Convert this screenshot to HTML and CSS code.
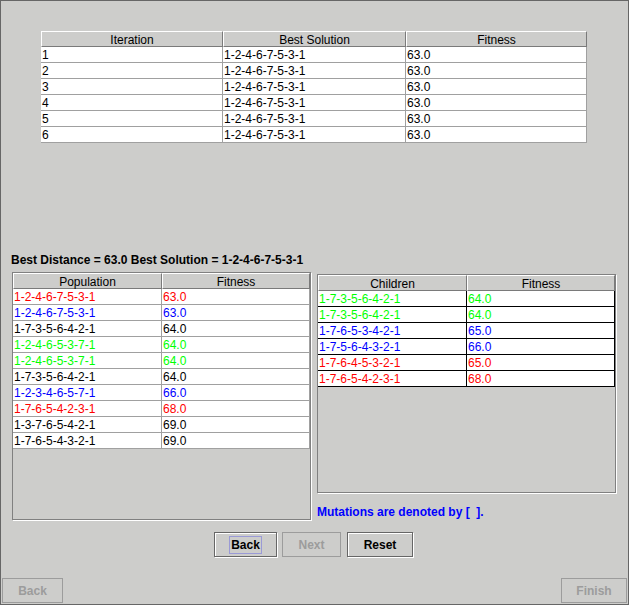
FILE: index.html
```html
<!DOCTYPE html>
<html>
<head>
<meta charset="utf-8">
<title>Genetic Algorithm</title>
<link rel="stylesheet" href="styles.css">
</head>
<body>
<div class="frame">
  <div class="table top">
    <div class="th">Iteration</div><div class="th">Best Solution</div><div class="th">Fitness</div>
    <div class="td">1</div><div class="td">1-2-4-6-7-5-3-1</div><div class="td">63.0</div>
    <div class="td">2</div><div class="td">1-2-4-6-7-5-3-1</div><div class="td">63.0</div>
    <div class="td">3</div><div class="td">1-2-4-6-7-5-3-1</div><div class="td">63.0</div>
    <div class="td">4</div><div class="td">1-2-4-6-7-5-3-1</div><div class="td">63.0</div>
    <div class="td">5</div><div class="td">1-2-4-6-7-5-3-1</div><div class="td">63.0</div>
    <div class="td">6</div><div class="td">1-2-4-6-7-5-3-1</div><div class="td">63.0</div>
  </div>

  <div class="best">Best Distance = 63.0 Best Solution = 1-2-4-6-7-5-3-1</div>

  <div class="panels">
    <div class="panel left">
      <div class="table pop">
        <div class="th">Population</div><div class="th">Fitness</div>
        <div class="td r">1-2-4-6-7-5-3-1</div><div class="td r">63.0</div>
        <div class="td b">1-2-4-6-7-5-3-1</div><div class="td b">63.0</div>
        <div class="td">1-7-3-5-6-4-2-1</div><div class="td">64.0</div>
        <div class="td g">1-2-4-6-5-3-7-1</div><div class="td g">64.0</div>
        <div class="td g">1-2-4-6-5-3-7-1</div><div class="td g">64.0</div>
        <div class="td">1-7-3-5-6-4-2-1</div><div class="td">64.0</div>
        <div class="td b">1-2-3-4-6-5-7-1</div><div class="td b">66.0</div>
        <div class="td r">1-7-6-5-4-2-3-1</div><div class="td r">68.0</div>
        <div class="td">1-3-7-6-5-4-2-1</div><div class="td">69.0</div>
        <div class="td">1-7-6-5-4-3-2-1</div><div class="td">69.0</div>
      </div>
    </div>
    <div class="side">
      <div class="panel right">
        <div class="table kids">
          <div class="th">Children</div><div class="th">Fitness</div>
          <div class="td g">1-7-3-5-6-4-2-1</div><div class="td g">64.0</div>
          <div class="td g">1-7-3-5-6-4-2-1</div><div class="td g">64.0</div>
          <div class="td b">1-7-6-5-3-4-2-1</div><div class="td b">65.0</div>
          <div class="td b">1-7-5-6-4-3-2-1</div><div class="td b">66.0</div>
          <div class="td r">1-7-6-4-5-3-2-1</div><div class="td r">65.0</div>
          <div class="td r">1-7-6-5-4-2-3-1</div><div class="td r">68.0</div>
        </div>
      </div>
      <div class="note">Mutations are denoted by [&nbsp;&nbsp;].</div>
    </div>
  </div>

  <div class="nav">
    <div class="btn nback focused"><span class="focus">Back</span></div>
    <div class="btn nnext disabled">Next</div>
    <div class="btn nreset">Reset</div>
  </div>

  <div class="wizard">
    <div class="btn wback disabled">Back</div>
    <div class="btn wfinish disabled">Finish</div>
  </div>
</div>
</body>
</html>
```
FILE: styles.css
```css
* { box-sizing: border-box; }

body {
  margin: 0;
  background: #cdcdcb;
  font-family: "Liberation Sans", Arial, sans-serif;
  font-size: 12px;
  color: #000;
}

.frame {
  width: 629px;
  height: 605px;
  border: 1px solid #666;
  background: #cdcdcb;
  overflow: hidden;
}

.table {
  display: grid;
  background: #fff;
}

.table.top {
  width: 546px;
  margin: 30px 0 0 40px;
  grid-template-columns: 182px 183px 181px;
}

.table.pop,
.table.kids {
  grid-template-columns: 149px 148px;
}

.th {
  height: 16px;
  padding-top: 3px;
  line-height: 11px;
  text-align: center;
  background: #cdcdcb;
  border-top: 1px solid #fff;
  border-left: 1px solid #fff;
  border-bottom: 1px solid #7a7a7a;
  border-right: 1px solid #7a7a7a;
  white-space: nowrap;
}

.td {
  height: 16px;
  padding: 2px 0 0 1px;
  line-height: 13px;
  border-bottom: 1px solid #a0a0a0;
  border-right: 1px solid #a0a0a0;
  white-space: nowrap;
  overflow: hidden;
}

.kids .td { border-color: #000; }

.r { color: #ff0000; }
.b { color: #0000ff; }
.g { color: #00ff00; }

.best {
  margin: 110px 0 0 10px;
  font-weight: bold;
  line-height: 14px;
  white-space: nowrap;
}

.panels {
  display: flex;
  align-items: flex-start;
  margin: 5px 0 0 11px;
}

.panel {
  width: 299px;
  border: 1px solid #808080;
  box-shadow: 1px 1px 0 #fff;
}

.panel.left { height: 248px; }
.panel.right { height: 219px; }

.side {
  margin-left: 6px;
  padding-top: 2px;
}

.note {
  margin-top: 12px;
  color: #0000ff;
  font-weight: bold;
  line-height: 14px;
  white-space: nowrap;
}

.nav {
  display: flex;
  margin: 12px 0 0 213px;
}

.btn {
  height: 25px;
  border: 1px solid #666;
  box-shadow: inset 1px 1px 0 #fff, 1px 1px 0 #fff;
  font-weight: bold;
  text-align: center;
  padding-top: 4px;
  line-height: 17px;
  white-space: nowrap;
}

.btn.disabled {
  border-color: #9c9c9c;
  box-shadow: none;
  color: #9c9c9c;
}

.btn.focused { padding-top: 3px; }

.focus {
  display: inline-block;
  vertical-align: top;
  border: 1px solid #9a9ad6;
  padding: 1px 1px 0;
  line-height: 15px;
}

.nback { width: 63px; }
.nnext { width: 59px; margin-left: 5px; }
.nreset { width: 66px; margin-left: 6px; }

.wizard {
  display: flex;
  justify-content: space-between;
  margin-top: 21px;
  padding: 0 1px;
}

.wback { width: 61px; }
.wfinish { width: 66px; }
```
